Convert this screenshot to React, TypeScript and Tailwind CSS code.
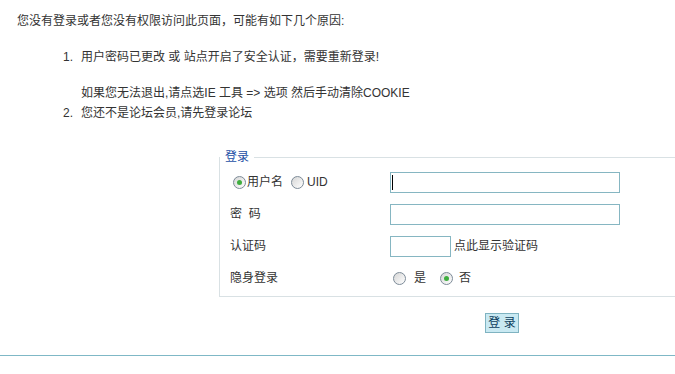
function Radio({ checked }: { checked?: boolean }) {
    return (
        <span className="flex h-[13px] w-[13px] shrink-0 items-center justify-center rounded-full border border-[#7d8b98] bg-gradient-to-br from-[#d6d6d6] to-white">
            {checked && <span className="h-[5px] w-[5px] rounded-full bg-[#3fae3f]" />}
        </span>
    );
}

function Row({ label, children }: { label: React.ReactNode; children: React.ReactNode }) {
    return (
        <div className="flex h-[32px] items-center">
            <div className="flex w-[160px] items-center">{label}</div>
            <div className="flex items-center">{children}</div>
        </div>
    );
}

export default function App() {
    return (
        <div className="w-[675px] h-[374px] overflow-hidden bg-white text-[12px] leading-[18px] text-[#333] font-['Liberation_Sans','Noto_Sans_CJK_SC',sans-serif]">
            <div className="pl-[17px] pt-[12px]">
                <p>您没有登录或者您没有权限访问此页面，可能有如下几个原因:</p>
                <ol className="mt-[18px] pl-[46px]">
                    <li className="flex">
                        <span className="w-[18px]">1.</span>
                        <div>
                            <p>用户密码已更改 或 站点开启了安全认证，需要重新登录!</p>
                            <p className="h-[18px]"></p>
                            <p>如果您无法退出,请点选IE 工具 =&gt; 选项 然后手动清除COOKIE</p>
                        </div>
                    </li>
                    <li className="mt-[2px] flex">
                        <span className="w-[18px]">2.</span>
                        <p>您还不是论坛会员,请先登录论坛</p>
                    </li>
                </ol>
            </div>

            <fieldset className="ml-[219px] mt-[26px] w-[480px] border border-[#d9e1e4] pb-[2px]">
                <legend className="px-[5px] text-[#1d4fa6]">登录</legend>
                <div className="pl-[10px]">
                    <Row
                        label={
                            <>
                                <span className="ml-[3px] flex"><Radio checked /></span>
                                <span className="ml-[1px]">用户名</span>
                                <span className="ml-[8px] flex"><Radio /></span>
                                <span className="ml-[3px]">UID</span>
                            </>
                        }
                    >
                        <div className="relative">
                            <input className="block h-[21px] w-[230px] border border-[#86b6c2] bg-white outline-none" />
                            <span className="absolute left-[2px] top-[3px] h-[15px] w-px bg-black" />
                        </div>
                    </Row>
                    <Row label={<span>密&nbsp;&nbsp;码</span>}>
                        <input type="password" className="block h-[21px] w-[230px] border border-[#86b6c2] bg-white outline-none" />
                    </Row>
                    <Row label={<span>认证码</span>}>
                        <input className="block h-[21px] w-[61px] border border-[#86b6c2] bg-white outline-none" />
                        <span className="ml-[3px]">点此显示验证码</span>
                    </Row>
                    <Row label={<span>隐身登录</span>}>
                        <span className="ml-[3px] flex"><Radio /></span>
                        <span className="ml-[8px]">是</span>
                        <span className="ml-[14px] flex"><Radio checked /></span>
                        <span className="ml-[6px]">否</span>
                    </Row>
                </div>
            </fieldset>

            <div className="mt-[16px] pl-[485px]">
                <button className="h-[20px] w-[34px] border border-[#7fb3c1] bg-[#c9e9f2] text-[12px] leading-[18px] text-[#0b3d5c]">
                    登 录
                </button>
            </div>

            <div className="mt-[22px] h-px w-full bg-[#7fb8c6]" />
        </div>
    );
}
